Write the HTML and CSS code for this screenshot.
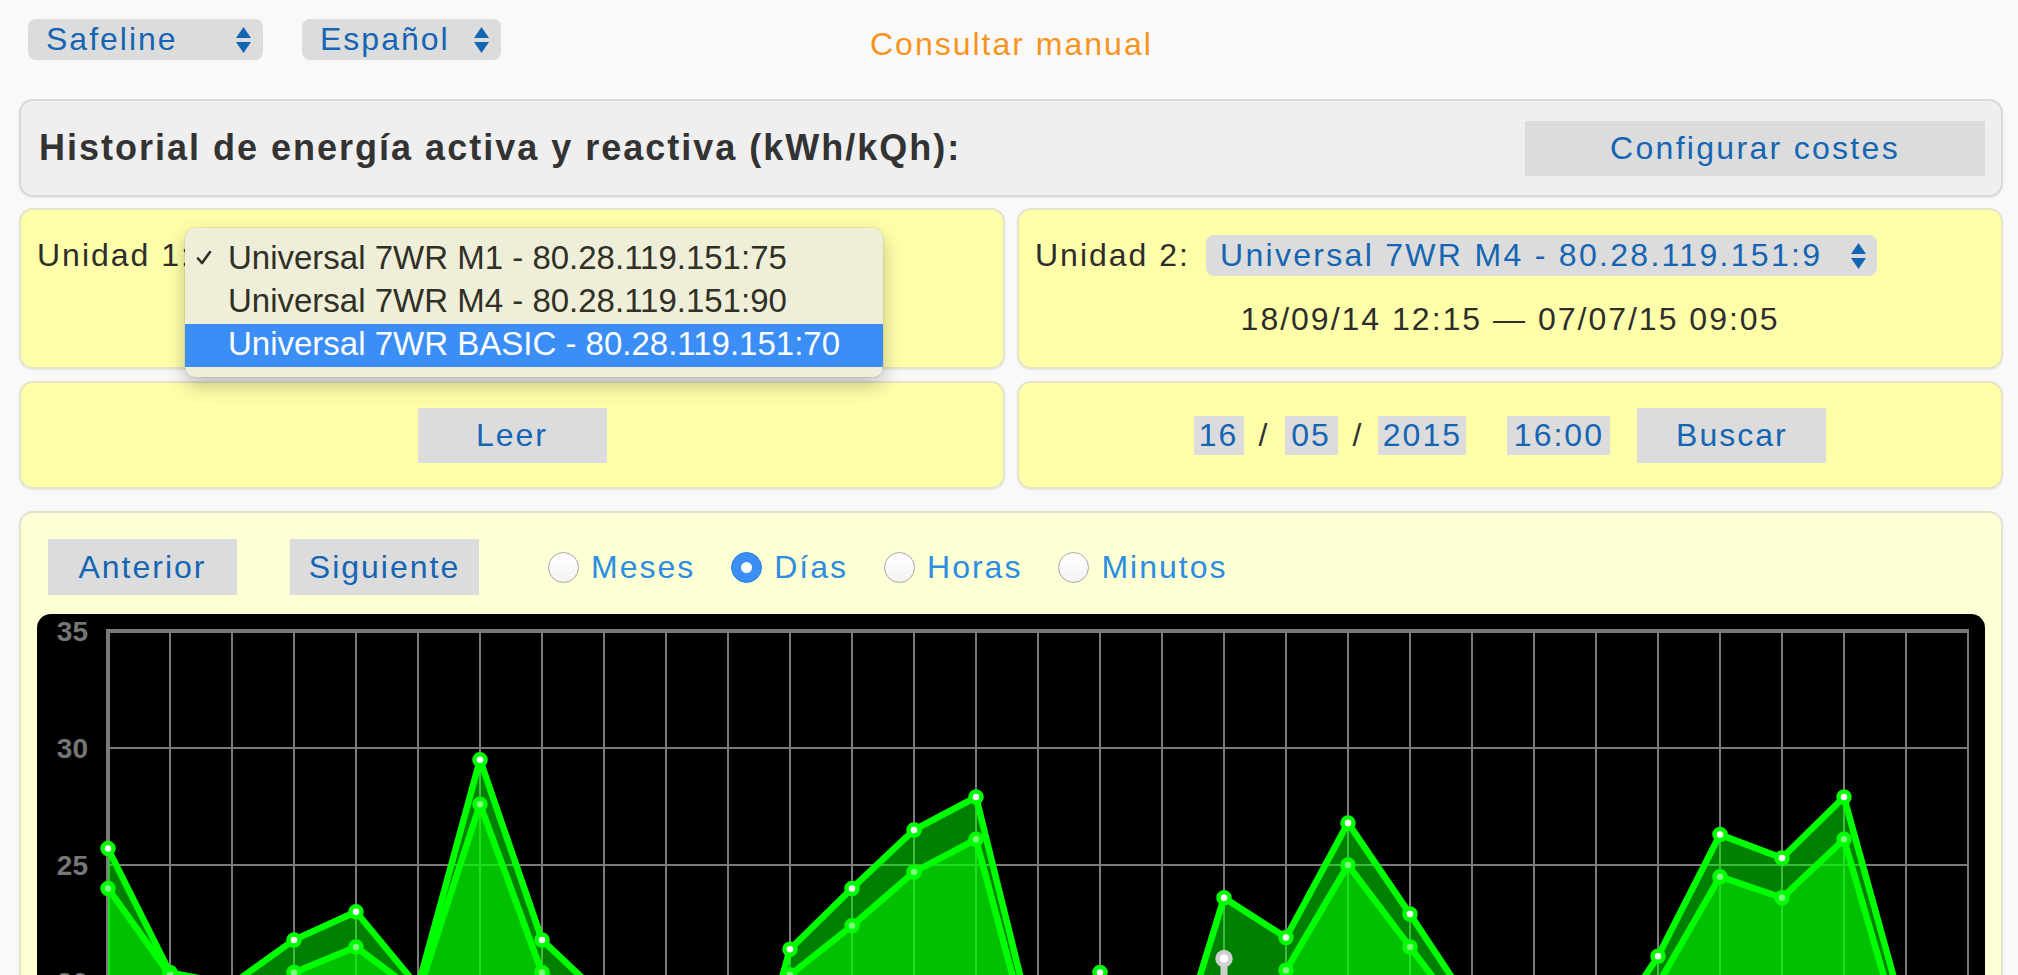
FILE: index.html
```html
<!DOCTYPE html>
<html lang="es">
<head>
<meta charset="utf-8">
<title>Historial de energía activa y reactiva</title>
<link rel="stylesheet" href="styles.css">
</head>
<body>
<div class="page">
  <div class="topbar">
    <div class="select sel-site">
      <span class="sel-text">Safeline</span>
      <svg class="arrows" viewBox="0 0 15 26"><path d="M7.5 0 L15 11 L0 11 Z M0 15 L15 15 L7.5 26 Z"/></svg>
    </div>
    <div class="select sel-lang">
      <span class="sel-text">Español</span>
      <svg class="arrows" viewBox="0 0 15 26"><path d="M7.5 0 L15 11 L0 11 Z M0 15 L15 15 L7.5 26 Z"/></svg>
    </div>
    <a class="manual" href="#">Consultar manual</a>
  </div>

  <div class="header">
    <h1 class="title">Historial de energía activa y reactiva (kWh/kQh):</h1>
    <button class="btn btn-costs">Configurar costes</button>
  </div>

  <div class="row row-units">
    <div class="panel unit-panel">
      <div class="unit-line">
        <span class="label">Unidad 1:</span>
      </div>
      <div class="menu">
        <div class="menu-item"><svg class="check" viewBox="0 0 16 16"><path d="M2 8.5 L6 13 L14 2"/></svg>Universal 7WR M1 - 80.28.119.151:75</div>
        <div class="menu-item">Universal 7WR M4 - 80.28.119.151:90</div>
        <div class="menu-item active">Universal 7WR BASIC - 80.28.119.151:70</div>
      </div>
    </div>
    <div class="panel unit-panel">
      <div class="unit-line">
        <span class="label">Unidad 2:</span>
        <div class="select sel-unit">
          <span class="sel-text">Universal 7WR M4 - 80.28.119.151:9</span>
          <svg class="arrows" viewBox="0 0 15 26"><path d="M7.5 0 L15 11 L0 11 Z M0 15 L15 15 L7.5 26 Z"/></svg>
        </div>
      </div>
      <div class="range">18/09/14 12:15 — 07/07/15 09:05</div>
    </div>
  </div>

  <div class="row row-actions">
    <div class="panel action-panel">
      <button class="btn btn-main">Leer</button>
    </div>
    <div class="panel action-panel">
      <span class="field f-day">16</span>
      <span class="sep">/</span>
      <span class="field f-month">05</span>
      <span class="sep">/</span>
      <span class="field f-year">2015</span>
      <span class="field f-time">16:00</span>
      <button class="btn btn-main btn-search">Buscar</button>
    </div>
  </div>

  <div class="chart-panel">
    <div class="controls">
      <button class="btn btn-nav">Anterior</button>
      <button class="btn btn-nav btn-next">Siguiente</button>
      <label class="radio-item first"><span class="radio"></span><span class="radio-label">Meses</span></label>
      <label class="radio-item"><span class="radio checked"></span><span class="radio-label">Días</span></label>
      <label class="radio-item"><span class="radio"></span><span class="radio-label">Horas</span></label>
      <label class="radio-item"><span class="radio"></span><span class="radio-label">Minutos</span></label>
    </div>
    <div class="chart">
      <svg id="chart" class="chart-svg" viewBox="0 0 1948 880" width="1948" height="880"></svg>
    </div>
  </div>
</div>
<script src="script.js"></script>
</body>
</html>
```

FILE: styles.css
```css
html {
  overflow: hidden;
}

body {
  margin: 0;
  background: #f9f9f9;
  font-family: "Liberation Sans", Arial, Helvetica, sans-serif;
  font-size: 32px;
  letter-spacing: 2px;
  color: #2d2d2d;
}

button {
  font: inherit;
  letter-spacing: inherit;
  border: 0;
  margin: 0;
  padding: 0;
  cursor: pointer;
}

.page {
  padding: 19px 15px 0 19px;
}

/* top bar */
.topbar {
  display: flex;
  align-items: center;
  height: 41px;
  margin-left: 9px;
  margin-bottom: 39px;
}

.select {
  box-sizing: border-box;
  height: 41px;
  display: flex;
  align-items: center;
  justify-content: space-between;
  background: #dcdcdc;
  border-radius: 8px;
  color: #1465b4;
  padding: 0 12px 0 18px;
  line-height: 41px;
  white-space: nowrap;
}

.sel-text {
  overflow: hidden;
}

.arrows {
  width: 15px;
  height: 26px;
  flex: none;
  fill: #1465b4;
}

.sel-site {
  width: 235px;
}

.sel-lang {
  width: 199px;
  margin-left: 39px;
}

.manual {
  margin-left: 369px;
  margin-top: 9px;
  color: #f7941d;
  text-decoration: none;
}

/* header */
.header {
  box-sizing: border-box;
  height: 98px;
  display: flex;
  align-items: center;
  justify-content: space-between;
  background: #efefef;
  border: 2px solid #d9d9d9;
  border-radius: 14px;
  box-shadow: 0 1px 2px rgba(0, 0, 0, 0.08);
  padding: 0 16px 0 18px;
}

.title {
  margin: 0;
  font-size: 36px;
  font-weight: bold;
  letter-spacing: 2px;
  color: #333;
}

.btn {
  background: #dcdcdc;
  color: #1465b4;
}

.btn-costs {
  width: 460px;
  height: 55px;
  letter-spacing: 2.3px;
}

/* rows */
.row {
  display: grid;
  grid-template-columns: 1fr 1fr;
  gap: 12px;
  margin-top: 11px;
}

.row-actions {
  margin-top: 12px;
}

.panel {
  box-sizing: border-box;
  background: #ffffaa;
  border: 2px solid #e4e4c6;
  border-radius: 14px;
  box-shadow: 0 1px 2px rgba(0, 0, 0, 0.08);
}

.unit-panel {
  position: relative;
  height: 161px;
  padding: 25px 16px 0 16px;
}

.unit-line {
  display: flex;
  align-items: center;
  height: 41px;
}

.label {
  color: #2d2d2d;
}

.sel-unit {
  width: 671px;
  margin-left: 16px;
  padding: 0 11px 0 14px;
  letter-spacing: 2.3px;
}

.range {
  margin-top: 23px;
  text-align: center;
  line-height: 40px;
  color: #2d2d2d;
}

/* native-like open menu */
.menu {
  position: absolute;
  left: 164px;
  top: 18px;
  z-index: 10;
  width: 698px;
  box-sizing: border-box;
  padding: 10px 0 10px 0;
  background: #efefd9;
  border-radius: 10px;
  box-shadow: 0 8px 20px rgba(0, 0, 0, 0.25), 0 0 0 1px rgba(0, 0, 0, 0.05);
  letter-spacing: 0;
  font-size: 33px;
  color: #303026;
}

.menu-item {
  position: relative;
  height: 43px;
  line-height: 39px;
  padding-left: 43px;
  white-space: nowrap;
}

.menu-item.active {
  background: #3a8ef5;
  color: #fff;
}

.check {
  position: absolute;
  left: 11px;
  top: 12px;
  width: 16px;
  height: 16px;
  fill: none;
  stroke: #303026;
  stroke-width: 2.6;
  stroke-linecap: round;
  stroke-linejoin: round;
}

.action-panel {
  height: 108px;
  display: flex;
  align-items: center;
  justify-content: center;
}

.btn-main {
  width: 189px;
  height: 55px;
}

.field {
  box-sizing: border-box;
  height: 39px;
  line-height: 39px;
  background: #dcdcdc;
  color: #1465b4;
  text-align: center;
}

.f-day { width: 50px; }
.f-month { width: 53px; }
.f-year { width: 88px; }
.f-time { width: 103px; margin-left: 41px; }

.sep {
  margin: 0 15px;
  color: #333;
}

.btn-search {
  margin-left: 27px;
}

/* chart panel */
.chart-panel {
  box-sizing: border-box;
  margin-top: 22px;
  background: #ffffd5;
  border: 2px solid #e4e4cc;
  border-radius: 14px;
  padding: 26px 16px 20px 16px;
  box-shadow: 0 1px 2px rgba(0, 0, 0, 0.08);
}

.controls {
  display: flex;
  align-items: center;
  height: 56px;
  padding-left: 11px;
}

.btn-nav {
  width: 189px;
  height: 56px;
}

.btn-next {
  margin-left: 53px;
}

.radio-item {
  display: flex;
  align-items: center;
  margin-left: 36px;
}

.radio-item.first {
  margin-left: 69px;
}

.radio {
  box-sizing: border-box;
  width: 31px;
  height: 31px;
  border-radius: 50%;
  background: linear-gradient(#ffffff, #f4f4f4);
  border: 1.5px solid #a8a8a8;
  margin-right: 12px;
  display: flex;
  align-items: center;
  justify-content: center;
}

.radio.checked {
  background: #3b8ef3;
  border-color: #2f80e6;
}

.radio.checked::after {
  content: "";
  width: 11px;
  height: 11px;
  border-radius: 50%;
  background: #fff;
}

.radio-label {
  color: #2b8de3;
}

.chart {
  margin-top: 19px;
  background: #000;
  border-radius: 14px 14px 0 0;
  height: 880px;
  overflow: hidden;
}

.chart-svg {
  display: block;
}

.chart-svg .g {
  stroke: #7a7a7a;
  stroke-width: 2;
}

.chart-svg .gb {
  stroke: #7a7a7a;
  stroke-width: 4;
}

.chart-svg .lbl {
  font-family: "Liberation Sans", Arial, sans-serif;
  font-weight: bold;
  font-size: 28px;
  letter-spacing: 0;
  fill: #767676;
  text-anchor: end;
}

.chart-svg .area {
  fill: rgba(0, 255, 0, 0.5);
}

.chart-svg .ln {
  fill: none;
  stroke: #00ff00;
  stroke-width: 6.5;
  stroke-linejoin: round;
}

.chart-svg .du {
  fill: #ffffff;
  stroke: #00ff00;
  stroke-width: 4.5;
}

.chart-svg .dl {
  fill: #7cff7c;
  stroke: #00ff00;
  stroke-width: 4.5;
}

.chart-svg .gm {
  stroke: #cfcfcf;
  stroke-width: 7;
}

.chart-svg .dg {
  fill: #ffffff;
  stroke: #cfcfcf;
  stroke-width: 4.5;
}
```

FILE: script.js
```js
(function () {
  var U = [25.7, 20.4, 19.9, 21.8, 23.0, 19.8, 29.5, 21.8, 19.3, 14, 12, 21.4, 24.0, 26.5, 27.9, 17.2, 20.4, 15, 23.6, 21.9, 26.8, 22.9, 18.9, 16, 17.1, 21.1, 26.3, 25.3, 27.9, 18.3, 15];
  var L = [24.0, 20.3, 18, 20.4, 21.5, 19.5, 27.6, 20.4, 18.5, 13, 11, 20.3, 22.4, 24.7, 26.1, 16.2, 17, 14, 15, 20.5, 25.0, 21.5, 18, 15, 16, 19.9, 24.5, 23.6, 26.1, 17, 14];
  var X0 = 71, DX = 62, Y0 = 17, K = 23.4;
  var B = Y0 + 35 * K;
  function x(i) { return X0 + i * DX; }
  function y(v) { return Y0 + (35 - v) * K; }
  var s = '';
  var v, i;
  for (v = 30; v >= 0; v -= 5) {
    s += '<line class="g" x1="' + X0 + '" y1="' + y(v) + '" x2="' + x(30) + '" y2="' + y(v) + '"/>';
  }
  for (i = 1; i <= 30; i++) {
    s += '<line class="g" x1="' + x(i) + '" y1="' + Y0 + '" x2="' + x(i) + '" y2="' + B + '"/>';
  }
  s += '<line class="gb" x1="' + (X0 - 2) + '" y1="' + Y0 + '" x2="' + (x(30) + 1) + '" y2="' + Y0 + '"/>';
  s += '<line class="gb" x1="' + X0 + '" y1="' + Y0 + '" x2="' + X0 + '" y2="' + B + '"/>';
  for (v = 35; v >= 20; v -= 5) {
    s += '<text class="lbl" x="51" y="' + (y(v) + 10).toFixed(1) + '">' + v + '</text>';
  }
  function pts(a) {
    return a.map(function (val, k) { return x(k).toFixed(1) + ',' + y(val).toFixed(1); }).join(' ');
  }
  function area(a) {
    return '<polygon class="area" points="' + X0 + ',' + B + ' ' + pts(a) + ' ' + x(30) + ',' + B + '"/>';
  }
  s += area(U) + area(L);
  s += '<polyline class="ln" points="' + pts(U) + '"/>';
  s += '<polyline class="ln" points="' + pts(L) + '"/>';
  s += '<line class="gm" x1="' + x(18) + '" y1="' + y(21) + '" x2="' + x(18) + '" y2="' + B + '"/>';
  U.forEach(function (val, k) {
    s += '<circle class="du" cx="' + x(k) + '" cy="' + y(val).toFixed(1) + '" r="5.5"/>';
  });
  L.forEach(function (val, k) {
    s += '<circle class="dl" cx="' + x(k) + '" cy="' + y(val).toFixed(1) + '" r="5.5"/>';
  });
  s += '<circle class="dg" cx="' + x(18) + '" cy="' + y(21).toFixed(1) + '" r="6.5"/>';
  document.getElementById('chart').innerHTML = s;
})();
```
